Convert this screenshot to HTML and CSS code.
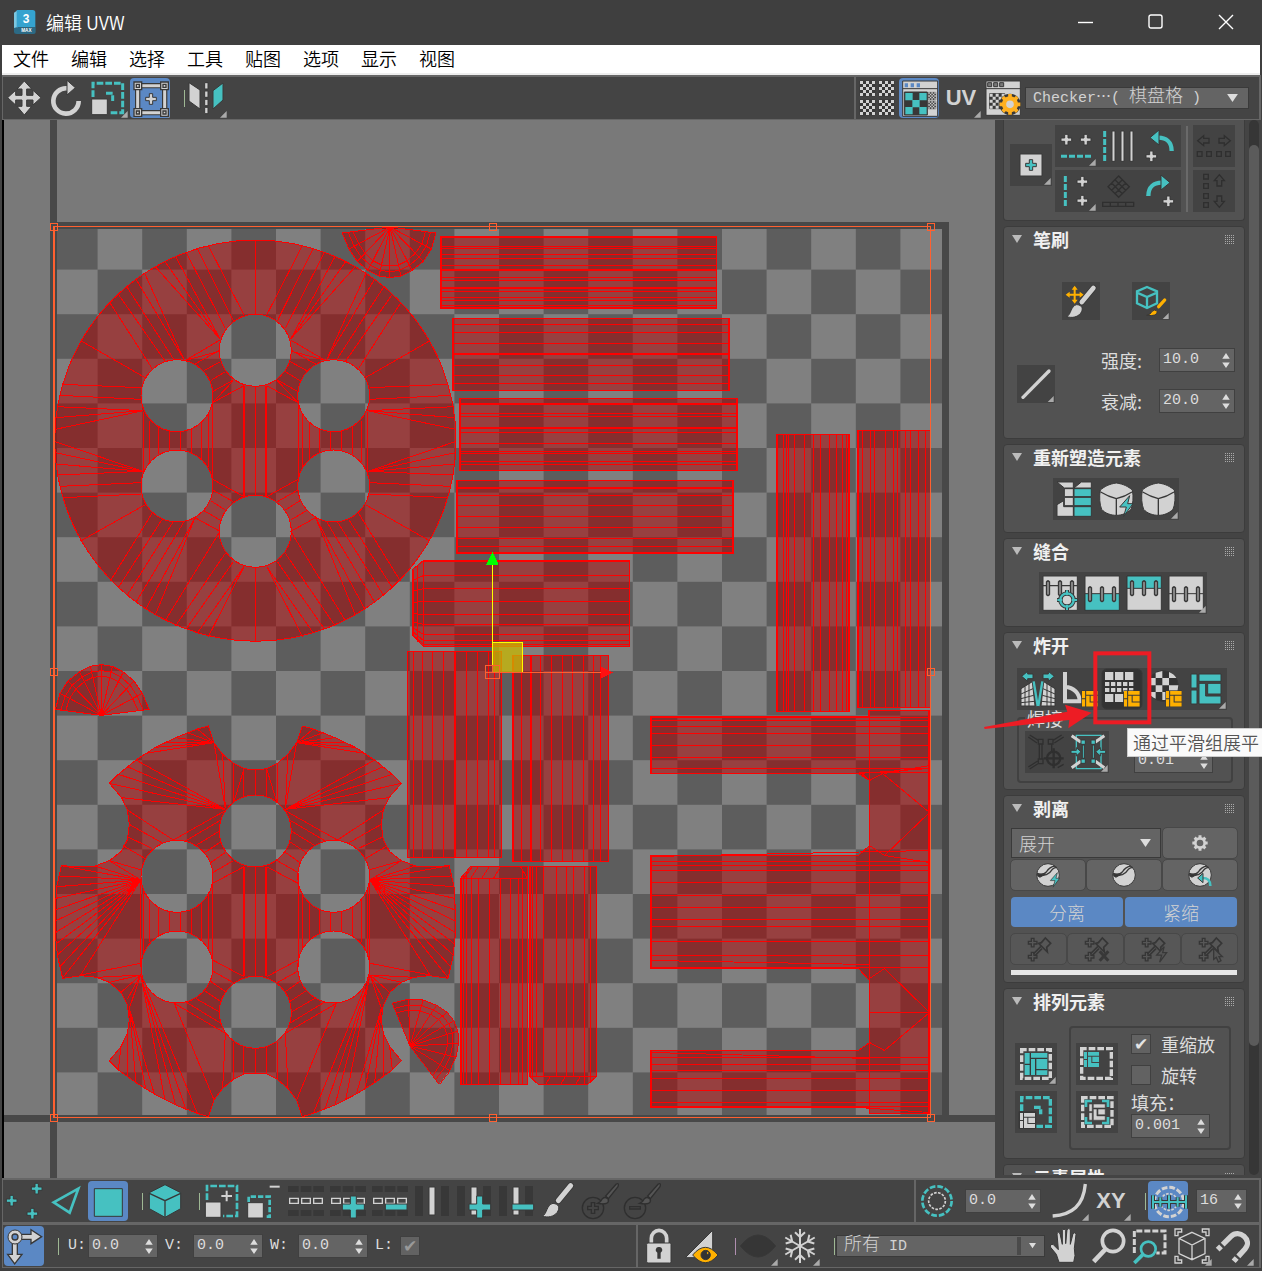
FILE: index.html
```html
<!DOCTYPE html>
<html lang="zh-CN">
<head>
<meta charset="utf-8">
<title>编辑 UVW</title>
<link rel="stylesheet" href="styles.css">
</head>
<body>
<svg class="defs" aria-hidden="true">
<defs>
<path id="plus" d="M-5-16h10v11h11v10H5v11h-10V5h-11v-10h11z"/>
<path id="tri" d="M122 102v20h-20z" fill="#aaa" stroke="none"/>
<path id="blk" d="M0 0h18v42H0zM24 0h66v22H24zM0 48h18v42H0zM24 28h20v38h46v24H24zM50 28h40v32H50z"/>
<g id="oblk"><path d="M67 67h50v50H67z" fill="#3a3a3a" stroke="none"/><use href="#blk" transform="translate(69 69) scale(.52)" fill="#ffb000" stroke="none"/></g>
<path id="arr" d="M-18 0L0-15v8h16v14H0v8z"/>
<g id="chk"><path d="M0 0h45v45H0z" fill="#383838"/><path d="M0 0h9v9H0zM18 0h9v9h-9zM36 0h9v9h-9zM9 9h9v9H9zM27 9h9v9h-9zM0 18h9v9H0zM18 18h9v9h-9zM36 18h9v9h-9zM9 27h9v9H9zM27 27h9v9h-9zM0 36h9v9H0zM18 36h9v9h-9zM36 36h9v9h-9z" stroke="none"/></g>
<path id="cube" d="M64 15C86 18 100 26 112 36C116 56 114 80 108 94C96 106 80 112 64 112C48 112 30 106 20 94C14 80 12 56 16 36C28 26 42 18 64 15z"/>
<path id="cubel" d="M17 42Q40 56 64 62Q90 56 111 42M64 62V112" fill="none" stroke-width="4"/>
<path id="bolt" d="M30 0L0 34h20l-8 28L40 24H24z"/>
<g id="brush"><path d="M97 17L60 62" fill="none" stroke="#383838" stroke-width="20" stroke-linecap="round"/><path d="M97 17L60 62" fill="none" stroke="#d2d2d2" stroke-width="15" stroke-linecap="round"/><path d="M12 108C26 104 24 74 44 70C62 72 66 84 56 98C46 110 28 114 12 108z"/></g>
<g id="ball"><circle cx="45" cy="45" r="34"/><path d="M12 40q18 6 28-4q10-16 26-18" fill="none" stroke-width="4"/><path d="M14 48q18-2 26-4q12-6 18-16q6-6 14-6" fill="none" stroke-width="4"/><path d="M12 44l26-2l-18 10z" fill="#333"/></g>
<g id="pin2" fill="none" stroke="#363636" stroke-width="5"><use href="#plus" transform="translate(26 26) scale(.8)"/><use href="#plus" transform="translate(26 68) scale(.8)"/><path d="M32 66L54 44M28 60L50 38M44 28l26 26l-2-14l12-12l-16-16l-12 14z" fill="none"/></g>
<g id="fan"><path class="m" d="M0 0L-138-18L-124-66L-100-103L-66-130L-33-147L0-152L33-147L66-130L98-103L123-66L143-18z"/><path class="n" d="M-121-17L-109-57L-87-91L-58-115L-29-130L0-134L29-130L58-115L86-91L108-57L125-17M-106-16L-96-50L-76-79L-50-102L-25-114L0-117L25-114L50-102L75-79L94-50L110-16M0 0L-124-66M0 0L-100-103M0 0L-66-130M0 0L-33-147M0 0V-152M0 0L33-147M0 0L66-130M0 0L98-103M0 0L123-66"/></g>
<pattern id="checks" x="53" y="225" width="89.2" height="89.2" patternUnits="userSpaceOnUse"><path d="M0 0h90v90H0z" fill="#808080"/><path d="M0 0h44.6v44.6H0zM44.6 44.6h44.6v44.6H44.6z" fill="#5d5d5d"/></pattern>
</defs>
</svg>

<header class="titlebar">
  <svg class="logo" viewBox="0 0 66 72"><path d="M0 8L12 0v54H0z" fill="#7cc7e0"/><path d="M8 0h48q8 0 8 8v44H8z" fill="#35a3cf"/><path d="M0 54l8-2h57v14q0 6-6 6H8q-8 0-8-6z" fill="#2c6a85"/><text x="36" y="38" class="logo-3">3</text><text x="37" y="66" class="logo-max">MAX</text></svg>
  <h1>编辑 UVW</h1>
  <div class="winctl">
    <button aria-label="最小化"><svg viewBox="0 0 16 16"><path d="M0 8.500h15"/></svg></button>
    <button aria-label="最大化"><svg viewBox="0 0 16 16"><rect x="1" y="1" width="13" height="13" rx="2"/></svg></button>
    <button aria-label="关闭"><svg viewBox="0 0 16 16"><path d="M1 1l14 14M15 1L1 15"/></svg></button>
  </div>
</header>
<nav class="menu"><a href="#">文件</a><a href="#">编辑</a><a href="#">选择</a><a href="#">工具</a><a href="#">贴图</a><a href="#">选项</a><a href="#">显示</a><a href="#">视图</a></nav>

<div class="bar">
  <button class="ib" aria-label="移动"><svg viewBox="0 0 126 126"><path d="M64 12l22 24H71v19h19V40l24 22-24 22V69H71v19h15l-22 26-22-26h15V69H38v15L14 62l24-22v15h19V36H42z"/></svg></button>
  <button class="ib" aria-label="旋转"><svg viewBox="0 0 126 126"><path class="sl" stroke-width="14" d="M101 72A38 38 0 1 1 66 34"/><path d="M66 10L91 32L66 54z"/></svg></button>
  <button class="ib" aria-label="缩放"><svg viewBox="0 0 126 126"><path class="st" stroke-width="9" stroke-dasharray="20 6" d="M18 60V19H107V107H66M57 49H77V72"/><path d="M14 66h47v47H14z"/><use href="#tri"/></svg></button>
  <button class="ib" aria-label="自由形式"><svg viewBox="0 0 126 126"><use href="#tri"/><rect class="on" x="3" y="3" width="120" height="120" rx="12"/><path fill="none" stroke="#383838" stroke-width="16" d="M26 26H107V107H26z"/><path class="sl" stroke-width="9" d="M26 26H107V107H26z"/><path stroke-width="4" d="M15 15h23v23H15zM95 15h23v23H95zM15 95h23v23H15zM95 95h23v23H95z"/><path fill="none" stroke-width="4" d="M22 22h9v9h-9zM102 22h9v9h-9zM22 102h9v9h-9zM102 102h9v9h-9z"/><use href="#plus" x="66" y="66"/></svg></button>
  <i class="sep"></i>
  <button class="ib" aria-label="镜像"><svg viewBox="0 0 126 126"><path d="M9 17L42 39V96L9 72zM56 17h10v19H56zM56 42h10v19H56zM56 67h10v19H56zM56 91h10v19H56z"/><path class="t" d="M81 41L111 18V69L81 96z"/><use href="#tri"/></svg></button>
  <div class="barright top">
    <button class="ib" aria-label="棋盘"><svg viewBox="0 0 126 126"><use href="#chk" x="12" y="12"/><use href="#chk" x="69" y="12"/><use href="#chk" x="12" y="69"/><use href="#chk" x="69" y="69"/></svg></button>
    <button class="ib" aria-label="显示贴图"><svg viewBox="0 0 126 126"><rect class="on" x="3" y="3" width="120" height="120" rx="12"/><path d="M14 12h105v106H14z"/><path d="M14 35h105" stroke-width="3"/><path class="on" d="M20 19h10v12H20zM38 19h10v12H38zM56 19h10v12H56z" stroke="#383838"/><path fill="#383838" d="M19 45h69v69H19z"/><path class="t" stroke="none" d="M22 48h22v22H22zM64 48h22v22H64zM43 69h22v22H43zM22 90h22v22H22zM64 90h22v22H64z"/><use href="#chk" transform="translate(91 46) scale(.5)"/><use href="#chk" transform="translate(91 73) scale(.5)"/></svg></button>
    <button class="ib txt" aria-label="UV"><span>UV</span><svg viewBox="0 0 126 126"><use href="#tri"/></svg></button>
    <button class="ib" aria-label="贴图设置"><svg viewBox="0 0 126 126"><path d="M12 12h103v103H12z"/><path d="M12 35h103" stroke-width="3"/><path fill="#777" d="M17 17h12v12H17zM35 17h12v12H35zM53 17h12v12H53z"/><use href="#chk" x="23" y="50"/><g transform="translate(84 82)"><circle r="24" fill="none" stroke="#383838" stroke-width="16"/><circle r="18" fill="none" stroke="#ffb020" stroke-width="13"/><path d="M0-31v14M0 31v-14M-31 0h14M31 0h-14M-22-22l10 10M22 22l-10-10M22-22l-10 10M-22 22l10-10" stroke="#ffb020" stroke-width="11"/></g></svg></button>
    <button class="combo checker"><span>Checker⋯( <b>棋盘格</b> )</span><svg viewBox="0 0 12 10"><path d="M0 0h12L6 9z"/></svg></button>
  </div>
</div>

<main>
<div class="viewport">
<svg viewBox="4 120 991 1058" preserveAspectRatio="xMinYMin slice" shape-rendering="crispEdges">
<path d="M4 120h991v1058H4z" fill="#797979"/>
<path d="M53 225h892v892H53z" fill="url(#checks)"/>
<path d="M53.500 120V1178M4 1118.500H995M50 225.500H949M945.500 225V1120" stroke="#484848" stroke-width="7" fill="none"/>
<g transform="translate(40 215) scale(.33333)">
  <path class="m" fill-rule="evenodd" d="M44 677a602 602 0 0 1 1204 0a602 602 0 0 1-1204 0zM538 406a108 108 0 0 0 216 0a108 108 0 0 0-216 0zM538 949a108 108 0 0 0 216 0a108 108 0 0 0-216 0zM303 542a108 108 0 0 0 216 0a108 108 0 0 0-216 0zM773 542a108 108 0 0 0 216 0a108 108 0 0 0-216 0zM303 813a108 108 0 0 0 216 0a108 108 0 0 0-216 0zM773 813a108 108 0 0 0 216 0a108 108 0 0 0-216 0z"/>
  <path id="discl" class="n" d="M646 74V298M505 92L612 300M472 100L580 318M438 111L556 340M407 125L540 372M375 140L540 372M346 155L540 372M314 175L432 434M288 192L432 434M259 213L403 436M235 238L375 438M209 262L336 460M122 377L314 487M68 508L302 518M58 541L303 553M50 575L310 587M46 608L310 587M46 643L310 587M46 680L308 769M46 713L308 769M47 747L308 769M52 780L308 769M60 814L303 803M68 848L303 837M122 978L314 870M211 1098L336 895M235 1118L365 915M262 1140L400 920M288 1162L432 920M317 1183L465 908M346 1200L465 908M377 1215L540 949M407 1232L556 1015M438 1243L580 1040M472 1254L612 1055M505 1265L612 1055M646 1280V1058M437 436L540 375M437 436L540 408M465 447L540 405M492 467L541 440M512 497L556 470M518 530L580 495M518 563L580 497M518 563L612 512M518 793L612 845M518 825L580 860M512 857L556 885M492 887L540 915M465 908L540 949M310 590V770M328 617V740M355 637V717M388 648V706M421 648V706M454 640V715M484 622V732M505 597V757M517 565V793M611 512V845M614 512V845M646 515V842"/>
  <use href="#discl" transform="translate(1292 0) scale(-1 1)"/>
  <use href="#fan" transform="translate(1050 36) rotate(180)"/>
</g>
<g transform="translate(40 640) scale(.33333)">
  <g id="gearl"><path class="m" fill-rule="evenodd" d="M646 390L612 386L580 370L548 343L522 308L505 258L472 267L407 293L346 322L288 360L235 403L208 430L245 473L262 510L268 553L262 600L243 635L208 662L165 678L124 681L64 677L50 740L46 810L46 885L53 950L68 1015L124 1007L170 1012L208 1027L243 1057L262 1095L268 1140L262 1180L243 1220L208 1262L235 1290L288 1328L343 1362L407 1395L472 1420L505 1430L522 1380L548 1345L580 1318L612 1302L646 1299M646 465a108 108 0 0 0 0 216M646 1009a108 108 0 0 0 0 216M303 709a108 108 0 0 0 216 0a108 108 0 0 0-216 0M303 981a108 108 0 0 0 216 0a108 108 0 0 0-216 0"/>
  <path class="n" d="M472 267L522 308L440 277M407 293L522 308L375 307M346 322L522 308L317 340M522 308L556 505L548 343M288 360L556 508L262 380M235 403L556 508L208 430M245 473L556 508M262 510L400 600M268 553L365 608M262 590L336 625M250 617L314 655M208 662L305 690M400 600L556 512M436 603L543 540M467 617L540 572M493 638L543 605M512 668L556 637M518 698L580 662M518 730L612 680M208 662L302 720M165 678L302 720L64 677M60 708L302 720L52 740M48 775L302 720L46 810M46 843L302 720L46 878M48 912L302 720L52 945M60 980L302 720L68 1013M122 1005L302 720M580 370V487M611 386V468M612 386L582 485M646 390V465M611 680V1008M614 680V1008M646 682V1008M517 700V981M505 760V930M484 790V900M454 810V880M421 817V873M388 817V873M355 803V888M328 780V905M310 750V940M302 720V980M122 1005L302 970M170 1012L302 1005L208 1027M243 1057L302 1005L262 1078M268 1105L302 1005M268 1105L288 1328M268 1105L317 1345M268 1105L343 1362M302 1005L375 1380M302 1005L407 1395M305 1020L438 1410M317 1040L472 1420M403 1090L522 1380M262 1180V1310M243 1220L235 1290M518 960L612 1010M518 993L580 1028M512 1024L556 1055M493 1052L543 1085M467 1075L540 1117M436 1085L543 1150M403 1090L556 1180L548 1345M580 1205V1318M612 1220V1302M646 1225V1299"/></g>
  <use href="#gearl" transform="translate(1292 0) scale(-1 1)"/>
  <use href="#fan" transform="translate(184 226)"/>
  <use href="#fan" transform="translate(1110 1218) rotate(60)"/>
</g>
<g transform="translate(.5 .5)">
<path class="m" d="M440 236h276v72H440zM441 236v72M440 246h276M440 248h276M440 254h276M440 258h276M440 265h276M440 269h276M440 270h276M440 277h276M440 280h276M440 287h276M440 288h276M440 291h276M440 297h276M440 300h276M440 305h276M440 307h276M440 237h276"/>
<path class="m" d="M452 318h277v72H452zM453 318v72M452 324h277M452 332h277M452 343h277M452 353h277M452 354h277M452 365h277M452 375h277M452 383h277M728 318v72"/>
<path class="m" d="M459 398h278v72H459zM460 398v72M459 403h278M459 404h278M459 413h278M459 416h278M459 427h278M459 428h278M459 432h278M459 443h278M459 451h278M459 453h278M459 461h278M459 464h278M736 398v72"/>
<path class="m" d="M456 480h277v73H456zM457 480v72M456 487h277M456 488h277M456 495h277M456 505h277M456 516h277M456 527h277M456 538h277M456 546h277M456 552h277M732 480v72"/>
<path class="m" d="M412 569L423 560H629V646H423L412 635z"/>
<path class="n" d="M423 560V646M417 565V641M412 580L423 575H629M412 591L423 588H629M412 602L423 601H629M412 613L423 614H629M412 621L423 624H629M412 627L423 634H629M412 631L423 640H629M412 634L423 644H629M423 561H629M413 569V635"/>
<path class="m" d="M407 651h94v206H407zM413 651v206M422 651v206M432 651v206M443 651v206M454 651v206M455 651v206M466 651v206M477 651v206M488 651v206M494 651v206"/>
<path class="m" d="M512 655h96v206H512zM513 655v206M521 655v206M530 655v206M531 655v206M540 655v206M551 655v206M562 655v206M572 655v206M583 655v206M593 655v206M600 655v206"/>
<path class="m" d="M460 878L470 866H527V1084H460zM460 878H527M463 875V1084M466 871V1084M471 878V1084M478 878V1084M489 878V1084M500 878V1084M510 878V1084M518 878V1084M522 870V1084M461 878V1084M478 866l-8 12M489 866l-8 12M500 866l-7 12M520 866l7 12M472 866l-9 12"/>
<path class="m" d="M529 866H596V1076L587 1084H538L529 1076zM529 1076H596M532 866V1079M536 866V1076M543 866V1076M556 866V1076M566 866V1076M573 866V1076M584 866V1084M590 866V1082M530 866V1076M545 1084l5-8M560 1084l5-8M575 1084l5-8"/>
<path class="m" d="M776 434h73v277h-73zM777 434v277M783 434v277M786 434v277M788 434v277M794 434v277M804 434v277M813 434v277M820 434v277M829 434v277M836 434v277M842 434v277M846 434v277M848 434v277"/>
<path class="m" d="M857 430h73v277h-73zM858 430v277M862 430v277M870 430v277M874 430v277M885 430v277M893 430v277M897 430v277M905 430v277M910 430v277M918 430v277M925 430v277"/>
<path class="m" d="M650 716h218V710H929V1113H869V1107H650V1050H858L869 1042V980L858 968H650V855H858L869 845V780L858 773H650z"/>
<path class="n" d="M651 717H929M651 720H929M651 726H929M651 733H929M651 745H929M651 757H929M651 768H929M858 772H929M869 710V1113M651 856L929 850M651 861H929M651 865H929M651 870H929M651 882H929M651 895H929M651 907H929M651 919H929M651 926H929M651 941H929M651 955H929M651 960L869 964M651 967H929M860 772L869 780M869 780L882 773L929 812L884 855L869 845M869 978L884 968L929 1012L884 1050L869 1042M884 773L929 765M884 855L929 862M869 1012H929M651 1052L869 1058M651 1057H929M651 1064H929M651 1070H929M651 1078H929M651 1090H929M651 1102H929M651 1106H929M858 773L929 768M858 1107L929 1112M928 710V1113M651 716V772M651 855V968M651 1050V1107"/>
<path d="M54 226V1117M53 226H930V1117H53z" class="sel"/>
<path class="sel" d="M50 223h7v7h-7zM489 223h7v7h-7zM927 223h7v7h-7zM50 668h7v7h-7zM927 668h7v7h-7zM50 1114h7v7h-7zM489 1114h7v7h-7zM927 1114h7v7h-7z"/>
<path d="M492 642h30v30H492z" fill="#c8b800" fill-opacity=".75" stroke="#ff0"/>
<path d="M492 560V666" stroke="#ff0"/><path d="M492 551L498 564H486z" fill="#0f0"/>
<path class="sel" d="M485 665h14v13H485zM492 665v7H604M485 672h8"/><path d="M600 666l12 6-12 6z" fill="#f11"/>
</g>
</svg>
</div>

<aside class="side">
<div class="rollups">
  <section class="roll first">
    <button class="ib dk" aria-label="设置"><svg viewBox="0 0 126 126"><path d="M30 30h66v66H30z"/><use class="t" href="#plus" x="63" y="63"/><use href="#tri"/></svg></button>
    <div class="grid3 dk">
      <button class="ib" aria-label="对齐"><svg viewBox="0 0 126 126"><use href="#plus" x="34" y="44"/><use href="#plus" x="92" y="44"/><path class="st" stroke-width="9" stroke-dasharray="18 6" d="M18 94H108"/><use href="#tri"/></svg></button>
      <button class="ib" aria-label="间距"><svg viewBox="0 0 126 126"><path class="st" stroke-width="9" stroke-dasharray="18 6" d="M23 18V108"/><path d="M45 18h9v91h-9zM72 18h9v91h-9zM99 18h9v91h-9z"/></svg></button>
      <button class="ib" aria-label="左转"><svg viewBox="0 0 126 126"><path class="st" stroke-width="13" d="M98 78C98 50 80 38 58 38"/><path class="t" d="M33 38L60 15V60z"/><use href="#plus" x="37" y="94"/></svg></button>
    </div>
    <div class="grid3 dk row2">
      <button class="ib" aria-label="垂直对齐"><svg viewBox="0 0 126 126"><use href="#plus" x="82" y="35"/><use href="#plus" x="82" y="92"/><path class="st" stroke-width="9" stroke-dasharray="18 6" d="M31 18V108"/><use href="#tri"/></svg></button>
      <button class="ib" aria-label="拉直"><svg viewBox="0 0 126 126"><path class="dim" d="M65 18L97 50L65 82L33 50zM54 29L86 61M44 39L76 71M76 29L44 61M86 39L54 71M17 97h93v12H17zM40 97v12M63 97v12M86 97v12"/></svg></button>
      <button class="ib" aria-label="右转"><svg viewBox="0 0 126 126"><path class="st" stroke-width="13" d="M28 78C28 50 46 38 68 38"/><path class="t" d="M93 38L66 15V60z"/><use href="#plus" x="88" y="94"/></svg></button>
    </div>
    <i class="vline"></i>
    <button class="ib dk h1" aria-label="水平分布"><svg viewBox="0 0 126 126"><g class="dim"><use href="#arr" x="32" y="47"/><use href="#arr" transform="translate(94 47) rotate(180)"/><path d="M13 80h14v14H13zM41 80h14v14H41zM71 80h14v14H71zM98 80h14v14H98z"/></g></svg></button>
    <button class="ib dk h2" aria-label="垂直分布"><svg viewBox="0 0 126 126"><g class="dim"><use href="#arr" transform="translate(79 32) rotate(90)"/><use href="#arr" transform="translate(79 94) rotate(-90)"/><path d="M32 13h14v14H32zM32 41h14v14H32zM32 71h14v14H32zM32 98h14v14H32z"/></g></svg></button>
  </section>

  <section class="roll brushes">
    <h2>笔刷</h2>
    <div class="brushrow">
      <button class="ib sm dk" aria-label="绘制移动"><svg viewBox="0 0 114 114"><path stroke="#ffb000" stroke-width="6" fill="none" d="M38 16V60M16 38H60"/><path fill="#ffb000" stroke="none" d="M38 11l9 12H29zM38 65l9-12H29zM11 38l12-9v18zM65 38l-12-9v18z"/><use href="#brush" transform="translate(3 2) scale(.94)"/></svg></button>
      <button class="ib sm dk" aria-label="松弛"><svg viewBox="0 0 114 114"><path class="st" stroke-width="7" d="M45 15L75 28V64L45 78L15 64V28zM15 32L45 45L75 32M45 45V78"/><path d="M98 54L80 74" stroke="#ffb000" stroke-width="10" stroke-linecap="round"/><path fill="#ffb000" d="M44 100q12-2 16-12q8-8 16 0q0 16-32 12z"/><path d="M110 93v18H92z" fill="#aaa" stroke="none"/></svg></button>
    </div>
    <div class="brushset">
      <button class="ib sm dk" aria-label="衰减类型"><svg viewBox="0 0 114 114"><path class="sl" stroke-width="10" stroke-linecap="round" d="M18 97L96 18"/><path d="M110 93v18H92z" fill="#aaa" stroke="none"/></svg></button>
      <div class="fields">
        <label for="str">强度:</label><span class="spin w75"><input id="str" value="10.0"><svg viewBox="0 0 8 16"><path d="M4 0l4 6H0zM4 16l4-6H0z"/></svg></span>
        <label for="fal">衰减:</label><span class="spin w75"><input id="fal" value="20.0"><svg viewBox="0 0 8 16"><path d="M4 0l4 6H0zM4 16l4-6H0z"/></svg></span>
      </div>
    </div>
  </section>

  <section class="roll reshape">
    <h2>重新塑造元素</h2>
    <div class="icons three dk">
      <button class="ib" aria-label="拉直选定项"><svg viewBox="0 0 126 126"><path d="M12 12h49v18H34zM34 32h27v24H34zM34 58h27v25H34zM12 80l20-12v18h29v29H12zM63 30l22-18h30v18z"/><path class="t" d="M63 32h52v24H63zM63 58h52v25H63zM63 86h52v29H63z"/></svg></button>
      <button class="ib" aria-label="松弛直到展平"><svg viewBox="0 0 126 126"><use href="#cube"/><use href="#cubel"/><use class="t" href="#bolt" x="74" y="53"/></svg></button>
      <button class="ib" aria-label="松弛自定义"><svg viewBox="0 0 126 126"><use href="#cube"/><use href="#cubel"/><use href="#tri"/></svg></button>
    </div>
  </section>

  <section class="roll reshape">
    <h2>缝合</h2>
    <div class="icons dk">
      <button class="ib" aria-label="缝合到目标"><svg viewBox="0 0 126 126"><path d="M12 12h103v103H12z"/><path d="M12 41h103" stroke-width="4"/><path class="stp" d="M23 30q4-7 8 0v37q-4 7-8 0zM59 30q4-7 8 0v37q-4 7-8 0zM95 30q4-7 8 0v37q-4 7-8 0z"/><circle cx="84" cy="84" r="20" fill="none" stroke="#383838" stroke-width="13"/><path d="M84 54v17M84 97v18M54 84h17M97 84h18" stroke="#383838" stroke-width="12"/><circle class="st" cx="84" cy="84" r="20" stroke-width="7"/><path class="st" stroke-width="6" d="M84 55v15M84 98v16M55 84h15M98 84h16"/></svg></button>
      <button class="ib" aria-label="缝合到平均"><svg viewBox="0 0 126 126"><path d="M12 12h103v103H12z"/><path class="t" d="M12 65h103v50H12z"/><path class="stp" d="M23 48q4-7 8 0v37q-4 7-8 0zM59 48q4-7 8 0v37q-4 7-8 0zM95 48q4-7 8 0v37q-4 7-8 0z"/></svg></button>
      <button class="ib" aria-label="缝合到源"><svg viewBox="0 0 126 126"><path d="M12 12h103v103H12z"/><path class="t" d="M12 12h103v37H12z"/><path class="stp" d="M23 30q4-7 8 0v37q-4 7-8 0zM59 30q4-7 8 0v37q-4 7-8 0zM95 30q4-7 8 0v37q-4 7-8 0z"/></svg></button>
      <button class="ib" aria-label="缝合自定义"><svg viewBox="0 0 126 126"><path d="M12 12h103v103H12zM12 65h103"/><path class="stp" d="M23 48q4-7 8 0v37q-4 7-8 0zM59 48q4-7 8 0v37q-4 7-8 0zM95 48q4-7 8 0v37q-4 7-8 0z"/><use href="#tri"/></svg></button>
    </div>
  </section>

  <section class="roll explode">
    <h2>炸开</h2>
    <div class="icons dk">
      <button class="ib" aria-label="断开"><svg viewBox="0 0 126 126"><g id="brk"><path d="M12 62L46 41L54 114H12z"/><path stroke-width="3" fill="none" d="M12 78L48 62M12 92L50 82M12 104L52 100M24 55V114M36 48V114"/><path class="st" stroke-width="7" d="M50 40L62 114"/><use class="t" href="#arr" x="32" y="25"/></g><use href="#brk" transform="translate(126 0) scale(-1 1)"/></svg></button>
      <button class="ib" aria-label="按角度展平"><svg viewBox="0 0 126 126"><path class="sl" stroke-width="12" d="M18 12V100H62C62 76 44 58 18 56"/><use href="#oblk"/></svg></button>
      <button class="ib" aria-label="通过平滑组展平"><svg viewBox="0 0 126 126"><rect x="3" y="3" width="120" height="120" rx="14" fill="#333"/><path d="M12 12h25v24H12zM42 12h25v24H42zM72 12h25v24H72zM12 42h13v12H12zM30 42h13v12H30zM48 42h13v12H48zM66 42h13v12H66zM84 42h13v12H84zM12 60h13v12H12zM30 60h13v12H30zM48 60h13v12H48zM66 60h13v12H66zM84 60h13v12H84zM12 78h25v24H12zM42 78h25v24H42z" stroke="none"/><use href="#oblk"/></svg></button>
      <button class="ib" aria-label="按材质展平"><svg viewBox="0 0 126 126"><path fill="#333" d="M14 54a46 46 0 1 0 92 0a46 46 0 1 0-92 0"/><path d="M38 14L58 9V30H38zM78 12q16 6 22 18H78zM20 30h18v22H15zM58 30h20v22H58zM38 52h20v20H38zM78 52h28l-3 20H78zM17 72h21v20q-16-6-21-20zM58 72h20v24H58z" stroke="none"/><use href="#oblk"/></svg></button>
      <button class="ib" aria-label="展平自定义"><svg viewBox="0 0 126 126"><use class="t" href="#blk" x="18" y="18"/><use href="#tri"/></svg></button>
    </div>
    <fieldset class="weld"><legend>焊接</legend>
      <div class="pair dk">
      <button class="ib" aria-label="目标焊接"><svg viewBox="0 0 126 126"><path class="dim" d="M40 25h14v14H40zM70 25h14v14H70zM43 39v45M51 39v45M40 84h14v14H40zM80 38v24M10 18l26 18M14 12l26 16M116 18L88 36M110 12L84 28M10 108l28-18M14 114l28-18M98 110l18-10"/><circle cx="86" cy="82" r="20" class="dim wide"/><path class="dim wide" d="M86 52v60M56 82h60"/></svg></button>
      <button class="ib" aria-label="焊接选定项"><svg viewBox="0 0 126 126"><path class="st" stroke-width="4" d="M28 13h74v100H28z"/><path d="M14 14L42 34M112 14L84 34M14 110L42 90M112 110L84 90" class="sl" stroke-width="9"/><path class="t" d="M42 27h13v13H42zM72 27h13v13H72zM42 84h13v13H42zM72 84h13v13H72zM46 42h6v40h-6zM76 42h6v40h-6zM42 62L28 50v8H12v9h16v8zM86 62l14-12v8h16v9h-16v8z"/><use href="#tri"/></svg></button>
      </div>
      <div class="thr"><label for="thr">阈值:</label><span class="spin w78"><input id="thr" value="0.01"><svg viewBox="0 0 8 16"><path d="M4 0l4 6H0zM4 16l4-6H0z"/></svg></span></div>
    </fieldset>
  </section>

  <section class="roll peel">
    <h2>剥离</h2>
    <div class="six">
      <button class="combo c4"><span>展开</span><svg viewBox="0 0 12 10"><path d="M0 0h12L6 9z"/></svg></button>
      <button class="pb c2" aria-label="选项"><svg viewBox="0 0 90 90"><circle class="sl" cx="45" cy="45" r="14" stroke-width="8"/><path class="sl" stroke-width="9" d="M45 22v8M45 60v8M22 45h8M60 45h8M29 29l5 5M61 61l-5-5M61 29l-5 5M29 61l5-5"/></svg></button>
      <button class="pb c2" aria-label="快速剥离"><svg viewBox="0 0 90 90"><use href="#ball"/><use class="t" href="#bolt" transform="translate(52 38) scale(.7)"/></svg></button>
      <button class="pb c2" aria-label="剥离模式"><svg viewBox="0 0 90 90"><use href="#ball"/></svg></button>
      <button class="pb c2" aria-label="重置剥离"><svg viewBox="0 0 90 90"><use href="#ball"/><path class="st" stroke-width="8" d="M76 78C76 58 66 54 52 54"/><path class="t" d="M38 54L54 40V68z"/></svg></button>
    </div>
    <div class="two"><button class="blue">分离</button><button class="blue">紧缩</button></div>
    <div class="four">
      <button class="pb off" aria-label="固定"><svg viewBox="0 0 90 90"><use href="#pin2"/></svg></button>
      <button class="pb off" aria-label="取消固定"><svg viewBox="0 0 90 90"><use href="#pin2"/><path d="M56 52L82 80M82 52L56 80" stroke-width="9"/></svg></button>
      <button class="pb off" aria-label="自动固定"><svg viewBox="0 0 90 90"><use href="#pin2"/><use href="#bolt" transform="translate(56 38) scale(.75)" fill="#555" stroke-width="5"/></svg></button>
      <button class="pb off" aria-label="选择固定"><svg viewBox="0 0 90 90"><use href="#pin2"/><path d="M56 42V76l8-6 6 14 8-4-6-12h10z" fill="#555" stroke-width="4"/></svg></button>
    </div>
    <i class="whitebar"></i>
  </section>

  <section class="roll pack">
    <h2>排列元素</h2>
    <div class="packrow">
      <div class="stack">
        <button class="ib dk" aria-label="排列自定义"><svg viewBox="0 0 126 126"><path class="sl" stroke-width="10" stroke-dasharray="20 6" d="M15 20H106V106H20V20"/><path class="t" stroke="none" d="M29 30h68v66H29z"/><path d="M46 30v66M46 46h51M29 64h17M62 46v34h35M62 46v50" fill="none" stroke-width="4"/><use href="#tri"/></svg></button>
        <button class="ib dk" aria-label="重缩放元素"><svg viewBox="0 0 126 126"><path class="st" stroke-width="10" stroke-dasharray="20 6" d="M20 60V20H106V106H62M57 49H77V70"/><path d="M12 62h50v50H12z" fill="#383838"/><use href="#blk" transform="translate(15 66) scale(.5)" stroke="none"/></svg></button>
      </div>
      <div class="packbox">
        <div class="stack">
          <button class="ib dk" aria-label="排列在一起"><svg viewBox="0 0 126 126"><path class="sl" stroke-width="10" stroke-dasharray="20 6" d="M12 17H106V106H17V17"/><use class="t" href="#blk" transform="translate(24 27) scale(.5)" stroke="none"/></svg></button>
          <button class="ib dk" aria-label="排列规格化"><svg viewBox="0 0 126 126"><path class="sl" stroke-width="10" stroke-dasharray="20 6" d="M15 20H108V106H20V20"/><path class="st" stroke-width="8" d="M30 48V30h18M78 30h18v18M96 78v18H78M48 96H30V78"/><use href="#blk" transform="translate(39 39) scale(.54)"/></svg></button>
        </div>
        <div class="opts">
          <label class="ck"><input type="checkbox" checked>重缩放</label>
          <label class="ck"><input type="checkbox">旋转</label>
          <label for="pad">填充：</label>
          <span class="spin w78"><input id="pad" value="0.001"><svg viewBox="0 0 8 16"><path d="M4 0l4 6H0zM4 16l4-6H0z"/></svg></span>
        </div>
      </div>
    </div>
  </section>
  <section class="roll last"><h2>元素属性</h2></section>
</div>
<div class="scroll"><i></i></div>
</aside>
<div class="tip">通过平滑组展平</div>
<svg class="note" viewBox="0 0 846 510"><rect x="346" y="70" width="162" height="207" fill="none" stroke="#ed1c24" stroke-width="12"/><path d="M12 291L262 245L255 224L335 248L265 295L268 270L14 297z" fill="#ed1c24"/></svg>
</main>

<div class="bar">
  <button class="ib" aria-label="顶点"><svg viewBox="0 0 126 126"><g class="t"><use href="#plus" x="26" y="62"/><use href="#plus" x="101" y="26"/><use href="#plus" x="88" y="101"/></g></svg></button>
  <button class="ib" aria-label="边"><svg viewBox="0 0 126 126"><path class="st" stroke-width="8" d="M26 67L100 26L74 98z"/></svg></button>
  <button class="ib" aria-label="多边形"><svg viewBox="0 0 126 126"><rect class="on" x="3" y="3" width="120" height="120" rx="12"/><path class="t" d="M22 26h84v83H22z"/></svg></button>
  <i class="sep"></i>
  <button class="ib" aria-label="元素"><svg viewBox="0 0 126 126"><path class="t" d="M63 14L110 38V86L63 112L16 86V38z"/><path fill="none" stroke-width="4" d="M16 40L63 62L110 40M63 62V112"/></svg></button>
  <i class="sep"></i>
  <button class="ib" aria-label="扩大选择"><svg viewBox="0 0 126 126"><path class="st" stroke-width="8" stroke-dasharray="20 6" d="M18 60V18H108V108H66"/><path d="M13 66h47v46H13z"/><path class="sl" stroke-width="6" d="M77 32v32M61 48h32"/></svg></button>
  <button class="ib" aria-label="收缩选择"><svg viewBox="0 0 126 126"><path class="st" stroke-width="8" stroke-dasharray="16 6" d="M17 66V50H80V110H68"/><path d="M14 68h47v46H14z"/><path class="sl" stroke-width="6" d="M80 20h30"/></svg></button>
  <button class="ib" aria-label="循环"><svg viewBox="0 0 126 126"><path id="loopb" fill="#383838" stroke="none" d="M9 18h32v18H9zM47 18h32v18H47zM85 18h32v18H85zM9 90h32v18H9zM47 90h32v18H47zM85 90h32v18H85z"/><path id="loopr" class="sl" stroke-width="4" d="M14 55h26v15H14zM50 55h26v15H50zM86 55h26v15H86z"/></svg></button>
  <button class="ib" aria-label="扩大循环"><svg viewBox="0 0 126 126"><use href="#loopb"/><use href="#loopr"/><path class="t" d="M70 48h18v24h24v18H88v24H70V90H46V72h24z"/></svg></button>
  <button class="ib" aria-label="收缩循环"><svg viewBox="0 0 126 126"><use href="#loopb"/><use href="#loopr"/><path class="t" d="M49 72h65v18H49z"/></svg></button>
  <button class="ib" aria-label="环形"><svg viewBox="0 0 126 126"><path id="ringb" fill="#383838" stroke="none" d="M12 18h24v90H12zM90 18h24v90H90z"/><path d="M54 21h18v84H54z"/></svg></button>
  <button class="ib" aria-label="扩大环形"><svg viewBox="0 0 126 126"><use href="#ringb"/><path d="M54 21h18v84H54z"/><path class="t" d="M71 48h18v24h24v18H89v24H71V90H48V72h23z"/></svg></button>
  <button class="ib" aria-label="收缩环形"><svg viewBox="0 0 126 126"><use href="#ringb"/><path d="M54 21h18v84H54z"/><path class="t" d="M51 72h65v18H51z"/></svg></button>
  <button class="ib" aria-label="绘制选择"><svg viewBox="0 0 126 126"><use href="#brush" x="4"/></svg></button>
  <button class="ib" aria-label="增大笔刷"><svg viewBox="0 0 126 126"><g id="bsz" class="dim"><circle cx="42" cy="84" r="32"/><path d="M112 12L80 48L88 56L117 20q4-12-5-8z" class="dimf"/><path d="M56 70q10-4 14-14q10-8 18 2q4 18-32 12z" class="dimf"/></g><use class="dim" href="#plus" x="42" y="84"/></svg></button>
  <button class="ib" aria-label="减小笔刷"><svg viewBox="0 0 126 126"><use href="#bsz"/><path class="dim" d="M26 80h32v7H26z"/></svg></button>
  <div class="barright">
    <button class="ib" aria-label="软选择"><svg viewBox="0 0 126 126"><circle class="st" cx="63" cy="63" r="44" stroke-width="8" stroke-dasharray="17 6"/><circle class="sl" cx="63" cy="63" r="25" stroke-width="5" stroke-dasharray="8 4"/></svg></button>
    <span class="spin w75 ml"><input aria-label="衰减" value="0.0"><svg viewBox="0 0 8 16"><path d="M4 0l4 6H0zM4 16l4-6H0z"/></svg></span>
    <button class="ib ml" aria-label="衰减曲线"><svg viewBox="0 0 126 126"><path class="sl" stroke-width="10" d="M14 108C74 104 106 76 112 12"/><use href="#tri"/></svg></button>
    <button class="ib txt" aria-label="XY"><span>XY</span><svg viewBox="0 0 126 126"><use href="#tri"/></svg></button>
    <i class="sep"></i>
    <button class="ib" aria-label="按边限制"><svg viewBox="0 0 126 126"><rect class="on" x="3" y="3" width="120" height="120" rx="12"/><circle class="sl" cx="66" cy="66" r="44" stroke-width="9" stroke-dasharray="17 6"/><circle class="sl" cx="66" cy="66" r="25" stroke-width="5" stroke-dasharray="8 4"/><path fill="none" stroke-width="12" d="M18 66H117M18 46v40M40 52v28M66 46v40M92 52v28M117 46v40"/><path class="st" stroke-width="6" d="M18 66H117M18 46v40M40 52v28M66 46v40M92 52v28M117 46v40"/></svg></button>
    <span class="spin w50 ml"><input aria-label="边距离" value="16"><svg viewBox="0 0 8 16"><path d="M4 0l4 6H0zM4 16l4-6H0z"/></svg></span>
  </div>
</div>

<div class="bar">
  <button class="ib" aria-label="绝对模式"><svg viewBox="0 0 126 126"><rect class="on" x="3" y="3" width="120" height="120" rx="12"/><path stroke-width="4" d="M36 28h48V14l32 21-32 21V43H43V88h14L35 117L14 88h14V36z"/><circle cx="36" cy="36" r="21"/><circle cx="36" cy="36" r="9" fill="#5b88c4" stroke-width="4"/></svg></button>
  <i class="sep"></i>
  <div class="coords">
    <label for="u">U:</label><span class="spin w70"><input id="u" value="0.0"><svg viewBox="0 0 8 16"><path d="M4 0l4 6H0zM4 16l4-6H0z"/></svg></span>
    <label for="v">V:</label><span class="spin w70"><input id="v" value="0.0"><svg viewBox="0 0 8 16"><path d="M4 0l4 6H0zM4 16l4-6H0z"/></svg></span>
    <label for="w">W:</label><span class="spin w70"><input id="w" value="0.0"><svg viewBox="0 0 8 16"><path d="M4 0l4 6H0zM4 16l4-6H0z"/></svg></span>
    <label for="l">L:</label><input id="l" type="checkbox" checked disabled>
  </div>
  <div class="barright low">
    <button class="ib" aria-label="锁定"><svg viewBox="0 0 126 126"><path class="sl" stroke-width="11" d="M40 58V40a23 24 0 0 1 46 0V58"/><rect x="26" y="54" width="73" height="60" rx="4"/><path fill="#383838" stroke="none" d="M63 66a9 9 0 0 1 5 17v18H58V83a9 9 0 0 1 5-17z"/></svg></button>
    <button class="ib" aria-label="隐藏"><svg viewBox="0 0 126 126"><path d="M16 98L98 16V98z"/><path fill="#ffb000" d="M38 90q38-46 76 0q-38 46-76 0z"/><circle cx="77" cy="90" r="14" fill="#333"/><circle cx="83" cy="84" r="4" fill="#ffb000"/></svg></button>
    <i class="sep pk"></i>
    <button class="ib" aria-label="显示全部"><svg viewBox="0 0 126 126"><path fill="#363636" d="M10 63q53-66 106 0q-53 66-106 0z"/><use href="#tri"/></svg></button>
    <button class="ib" aria-label="冻结"><svg viewBox="0 0 126 126"><g id="fl"><path class="sl" stroke-width="6" d="M63 63V12M63 36L48 22M63 36L78 22M63 63V114M63 90L48 104M63 90L78 104"/></g><use href="#fl" transform="rotate(60 63 63)"/><use href="#fl" transform="rotate(120 63 63)"/><use href="#tri"/></svg></button>
    <i class="sep"></i>
    <button class="combo ids"><span><b>所有</b> ID</span><svg viewBox="0 0 12 10"><path d="M0 0h12L6 9z"/></svg></button>
    <button class="ib" aria-label="平移"><svg viewBox="0 0 126 126"><path d="M42 112L34 88L16 66q-2-10 8-8L40 74L36 26q4-8 9 0L52 58V16q5-8 10 0V56L66 14q6-7 10 0V58L84 26q6-7 9 2L88 70L90 92L86 112z"/></svg></button>
    <button class="ib" aria-label="缩放视图"><svg viewBox="0 0 126 126"><circle class="sl" cx="78" cy="48" r="32" stroke-width="11"/><path class="sl" stroke-width="14" d="M56 72L20 110"/></svg></button>
    <button class="ib" aria-label="缩放区域"><svg viewBox="0 0 126 126"><path class="sl" stroke-width="9" stroke-dasharray="18 6" d="M16 84V18H108V84H82"/><circle cx="58" cy="72" r="22" class="st" stroke-width="8"/><path class="st" stroke-width="11" d="M42 88L16 114"/></svg></button>
    <button class="ib" aria-label="最大化显示"><svg viewBox="0 0 126 126"><path class="sl" stroke-width="4" d="M63 22L102 40V86L63 104L24 86V40zM24 40L63 60L102 40M63 60V104M12 32V12h20v9H21V32zM114 32V12H94v9h11V32zM12 94v20h20v-9H21V94zM114 94v20H94v-9h11V94z"/><use href="#tri"/></svg></button>
    <button class="ib" aria-label="捕捉"><svg viewBox="0 0 126 126"><path class="sl" stroke-width="16" d="M14 74L24 64M29 59L54 34C78 10 120 44 96 72L76 94M71 99L62 109"/><use href="#tri"/></svg></button>
  </div>
</div>
</body>
</html>
```
FILE: styles.css
```css
* { box-sizing: border-box; }
html, body { height: 100%; }
body {
  margin: 0;
  padding-bottom: 3px;
  display: flex;
  flex-direction: column;
  background: #3f3f3f;
  color: #ddd;
  font-family: "Noto Sans CJK SC", sans-serif;
  font-size: 18px;
  line-height: 24px;
  overflow: hidden;
}
.defs { position: absolute; width: 0; height: 0; }
button { font: inherit; color: inherit; border: 0; padding: 0; background: none; }
h1, h2 { margin: 0; }

/* title and menu */
.titlebar { display: flex; align-items: center; flex: none; height: 45px; padding: 0 14px 2px; color: #fff; }
.logo { width: 22px; height: 24px; margin-right: 10px; }
.logo-3 { font: bold 36px "Liberation Sans", sans-serif; fill: #fff; text-anchor: middle; }
.logo-max { font: bold 14px "Liberation Sans", sans-serif; fill: #fff; text-anchor: middle; }
.titlebar h1 { font-size: 18px; line-height: 22px; font-weight: 350; }
.winctl { margin-left: auto; display: flex; gap: 54px; padding-right: 14px; }
.winctl button { width: 16px; height: 16px; display: flex; }
.winctl svg { width: 16px; height: 16px; fill: none; stroke: #fff; stroke-width: 1.4; }
.menu { flex: none; display: flex; gap: 22px; height: 30px; margin: 0 2px; padding: 1px 11px 0; background: #fff; border-bottom: 2px solid #eee; }
.menu a { color: #000; text-decoration: none; font-weight: 350; }

/* tool bars */
.bar { flex: none; display: flex; align-items: center; height: 45px; margin: 0 1px 0 2px; background: #444; border: 1px solid #666; border-top-width: 2px; border-right-width: 2px; }
.barright { display: flex; align-items: center; align-self: stretch; margin-left: auto; padding-right: 12px; border-left: 2px solid #666; }
.barright.low { padding-right: 4px; }
.barright.top { padding-right: 10px; }
.ib { width: 42px; height: 42px; flex: none; display: block; position: relative; }
.ib svg, .pb svg { display: block; width: 100%; height: 100%; fill: #d2d2d2; stroke: #383838; stroke-width: 3; }
.ib.sm { width: 38px; height: 38px; }
.dk { background: #434343; }
.t { fill: #46c1c1; }
.on { fill: #5b88c4; stroke: none; }
.sl { fill: none; stroke: #d2d2d2; }
.st { fill: none; stroke: #46c1c1; }
.stp { stroke-width: 5px; }
.dim { fill: none; stroke: #2f2f2f; stroke-width: 4px; }
.dim.wide { stroke-width: 7px; }
.dimf { fill: #555; }
.txt span { position: absolute; inset: 0; font: bold 22px/42px "Liberation Sans", sans-serif; color: #d2d2d2; text-align: center; }
.sep { width: 14px; height: 17px; flex: none; border-right: 1px solid #9fb894; margin-right: 1px; }
.sep.pk { border-color: #b08fb0; }
.ml { margin-left: 7px; }
.combo { display: flex; align-items: center; justify-content: space-between; background: #646464; border: 1px solid #3a3a3a; padding: 0 10px 0 7px; color: #d2d2d2; font: 15px/20px "Liberation Mono", "Noto Sans CJK SC", monospace; }
.combo b { font-size: 18px; font-weight: 300; }
.combo svg { width: 11px; height: 9px; fill: #ddd; }
.checker { width: 224px; height: 22px; margin-left: 1px; }
.ids { width: 209px; height: 22px; padding-right: 0; }
.ids svg { width: 27px; height: 18px; padding: 5px 8px; border-left: 4px solid #4a4a4a; }
.spin { display: flex; align-items: center; height: 24px; padding-right: 4px; background: #646464; border: 1px solid #404040; }
.spin input { flex: 1; min-width: 0; width: 0; height: 18px; border: 0; padding: 0 0 0 3px; background: none; color: #ddd; font: 15px/18px "Liberation Mono", monospace; outline: 0; }
.spin svg { width: 8px; height: 15px; fill: #ddd; }
.w50 { width: 51px; }
.w70 { width: 70px; }
.w75 { width: 76px; }
.w78 { width: 79px; }
.coords { display: flex; align-items: center; margin-left: 8px; font: 15px/24px "Liberation Mono", monospace; }
.coords label { width: 20px; }
.coords .spin { margin-right: 7px; }
.coords label:nth-of-type(n+2) { width: 28px; }
.coords label:nth-of-type(4) { width: 25px; }
input[type=checkbox] { appearance: none; width: 20px; height: 20px; margin: 0; background: #626262; border: 1px solid #404040; position: relative; flex: none; }
input[type=checkbox]:checked::after { content: "✔"; position: absolute; inset: 0; font: 17px/18px "DejaVu Sans", sans-serif; text-align: center; color: #e4e4e4; }
input[type=checkbox]:disabled::after { color: #999; }

/* work area */
main { flex: 1; min-height: 0; display: flex; position: relative; background: #444; }
.viewport { flex: 1; min-width: 0; margin-left: 2px; border-left: 2px solid #000; overflow: hidden; }
.viewport svg { display: block; width: 100%; height: 100%; }
.m, .n { fill: #ae0000; fill-opacity: .5; stroke: #f00; stroke-width: 1px; vector-effect: non-scaling-stroke; }
.n { fill: none; }
.sel { fill: none; stroke: #ff6030; stroke-width: 1px; }

/* side panel */
.side { width: 267px; flex: none; display: flex; padding-left: 8px; }
.rollups { width: 242px; display: flex; flex-direction: column; gap: 5px; overflow: hidden; margin-bottom: 3px; }
.roll { flex: none; background: #525252; border: 1px solid #3c3c3c; border-radius: 4px; padding: 0 7px; position: relative; }
.roll h2 { font-size: 18px; font-weight: 700; line-height: 24px; color: #f0f0f0; display: flex; align-items: center; gap: 11px; }
.roll h2::before { content: ""; border: 5px solid transparent; border-top: 8px solid #bbb; border-bottom: 0; margin-left: 1px; }
.roll h2::after { content: ""; margin: 0 3px 0 auto; width: 10px; height: 10px; background: linear-gradient(#525252 50%, transparent 50%) 0 0 / 2px 2px, linear-gradient(90deg, #525252 50%, #aaa 50%) 0 0 / 2px 2px; }
.first { display: grid; grid-template-columns: 42px 126px 2px 42px; column-gap: 3px; row-gap: 3px; padding: 5px 6px 8px; border-top: 0; border-radius: 0 0 4px 4px; align-items: center; }
.first > .ib:first-child { grid-row: 1 / 3; margin-bottom: 8px; }
.grid3, .icons, .pair { display: flex; }
.grid3 { grid-column: 2; }
.vline { grid-column: 3; grid-row: 1 / 3; background: #6a6a6a; height: 86px; width: 2px; margin-left: 2px; }
.h1 { grid-column: 4; grid-row: 1; margin-left: 4px; }
.h2 { grid-column: 4; grid-row: 2; margin-left: 4px; }
.brushes { padding-bottom: 25px; }
.brushrow { display: flex; justify-content: center; gap: 32px; padding: 31px 16px 28px 0; }
.brushset { display: flex; justify-content: space-between; align-items: flex-end; padding: 0 2px 0 6px; }
.brushset > .ib { margin-bottom: 10px; }
.fields { display: grid; grid-template-columns: 58px 76px; row-gap: 17px; align-items: center; }
.reshape { padding-bottom: 12px; }
.reshape .icons { width: max-content; margin: 9px 0 0 28px; }
.reshape .three { margin-left: 42px; }
.explode { padding-bottom: 6px; }
.explode .icons { width: max-content; margin: 11px 0 0 6px; }
.weld { margin: -2px 4px 0 6px; padding: 3px 8px 8px 6px; border: 2px solid #414141; border-radius: 4px; display: flex; justify-content: space-between; }
.weld legend { line-height: 20px; padding: 0 2px; }
.thr { display: flex; flex-direction: column; padding-right: 10px; margin-top: -6px; }
.peel { padding-bottom: 7px; }
.six, .two, .four { display: grid; gap: 2px; }
.six { grid-template-columns: repeat(6, 1fr); margin-top: 8px; }
.c4 { grid-column: span 4; font: 300 18px/28px "Noto Sans CJK SC", sans-serif; padding-right: 9px; }
.c2 { grid-column: span 2; }
.two { grid-template-columns: 1fr 1fr; margin-top: 7px; }
.four { grid-template-columns: repeat(4, 1fr); margin-top: 7px; }
.pb { height: 30px; background: #646464; border-radius: 4px; outline: 1px solid #484848; }
.pb svg { width: 30px; height: 30px; margin: 0 auto; }
.pb.off { background: #575757; }
.blue { height: 30px; border-radius: 4px; background: #5b88c4; font-weight: 300; color: #d2d2d2; }
.whitebar { display: block; height: 5px; margin-top: 6px; background: #e6e6e6; }
.pack { padding-bottom: 8px; }
.packrow { display: flex; justify-content: space-between; align-items: center; padding: 13px 6px 0 4px; }
.stack { display: flex; flex-direction: column; gap: 6px; }
.packbox { display: flex; gap: 13px; width: 162px; height: 124px; align-items: center; padding: 0 5px; border: 2px solid #414141; border-radius: 4px; }
.opts { display: flex; flex-direction: column; white-space: nowrap; align-self: flex-start; }
.ck { display: flex; align-items: center; gap: 10px; height: 31px; }
.last { height: 60px; }
.scroll { width: 10px; margin: 0 0 3px 4px; border-radius: 5px; background: #363636; padding-top: 25px; }
.scroll i { display: block; height: 87.5%; background: #5b5b5b; border-radius: 5px; }

/* overlays */
.tip { position: absolute; right: 0; top: 608px; height: 29px; padding: 1px 3px 0 5px; background: #fafafa; border: 1px solid #ccc; border-right: 0; color: #555; font-weight: 350; }
.note { position: absolute; right: 0; top: 510px; width: 282px; height: 170px; pointer-events: none; }
```
